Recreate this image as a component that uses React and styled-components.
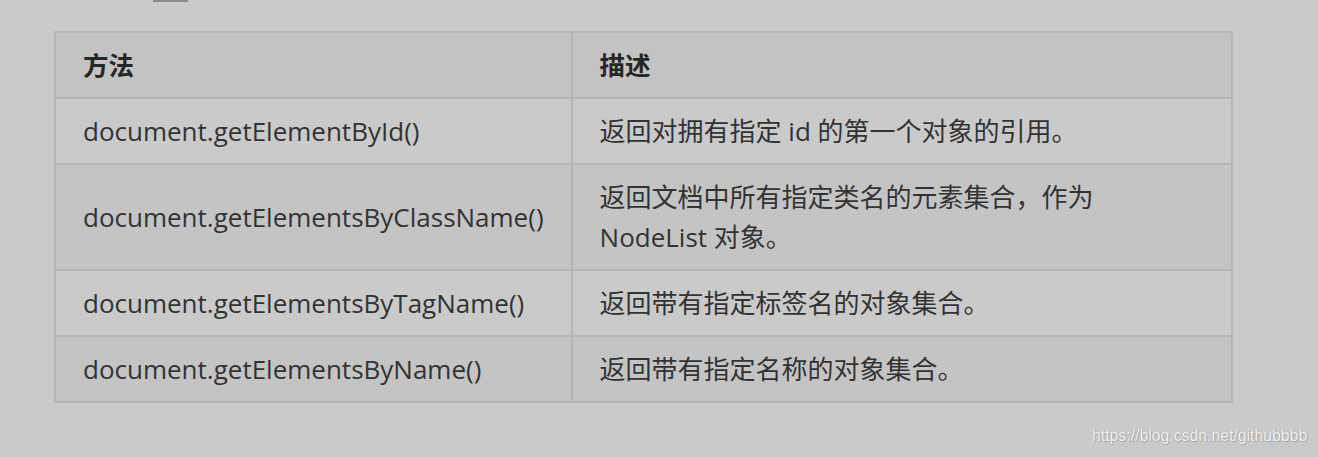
import React from "react";
import styled, { createGlobalStyle } from "styled-components";

const Global = createGlobalStyle`
  html, body { margin: 0; padding: 0; background: #cacaca; }
  body { font-family: "Open Sans", "Noto Sans CJK SC", sans-serif; }
`;

const Page = styled.div`
  width: 1318px;
  height: 457px;
  background: #cacaca;
  box-sizing: border-box;
  display: flex;
  flex-direction: column;
  overflow: hidden;
`;

const TopMark = styled.div`
  width: 35px;
  height: 2px;
  margin-left: 153px;
  background: #8c8c8c;
`;

const Table = styled.table`
  margin: 29px 0 0 54px;
  width: 1179px;
  border-collapse: collapse;
  border: 2px solid #b3b5b7;
  font-size: 26px;
  line-height: 40px;
  color: #333333;
`;

const Th = styled.th`
  text-align: left;
  font-weight: 700;
  background: #c3c3c3;
  border: 2px solid #b3b5b7;
  padding: 12px 27px 12px 27px;
  height: 40px;
  font-family: "Open Sans", "Noto Sans CJK SC", sans-serif;
  font-size: 25.5px;
  color: #262626;
  width: ${(p) => p.$w || "auto"};
  box-sizing: content-box;
`;

const Tr = styled.tr`
  background: ${(p) => (p.$alt ? "#c4c4c4" : "#cacaca")};
`;

const Td = styled.td`
  border: 2px solid #b3b5b7;
  padding: 12px 27px;
  vertical-align: middle;
  font-family: "Open Sans", "Noto Sans CJK SC", sans-serif;
  white-space: nowrap;
`;

const Watermark = styled.div`
  margin: 24px 0 0 1092px;
  font-family: "Liberation Sans", Arial, sans-serif;
  font-size: 15.8px;
  color: #f2f2f2;
  text-shadow: 0 0 1px #9a9a9a, 1px 1px 1px #a8a8a8;
  white-space: nowrap;
`;

const rows = [
  ["document.getElementById()", "返回对拥有指定 id 的第一个对象的引用。"],
  ["document.getElementsByClassName()", "返回文档中所有指定类名的元素集合，作为 NodeList 对象。"],
  ["document.getElementsByTagName()", "返回带有指定标签名的对象集合。"],
  ["document.getElementsByName()", "返回带有指定名称的对象集合。"],
];

export default function App() {
  return (
    <Page>
      <Global />
      <TopMark />
      <Table>
        <thead>
          <tr>
            <Th $w="459px">方法</Th>
            <Th>描述</Th>
          </tr>
        </thead>
        <tbody>
          {rows.map(([a, b], i) => (
            <Tr key={a} $alt={i % 2 === 1}>
              <Td>{a}</Td>
              <Td>
                {i === 1 ? (
                  <>
                    返回文档中所有指定类名的元素集合，作为
                    <br />
                    NodeList 对象。
                  </>
                ) : (
                  b
                )}
              </Td>
            </Tr>
          ))}
        </tbody>
      </Table>
      <Watermark>https://blog.csdn.net/githubbbb</Watermark>
    </Page>
  );
}
